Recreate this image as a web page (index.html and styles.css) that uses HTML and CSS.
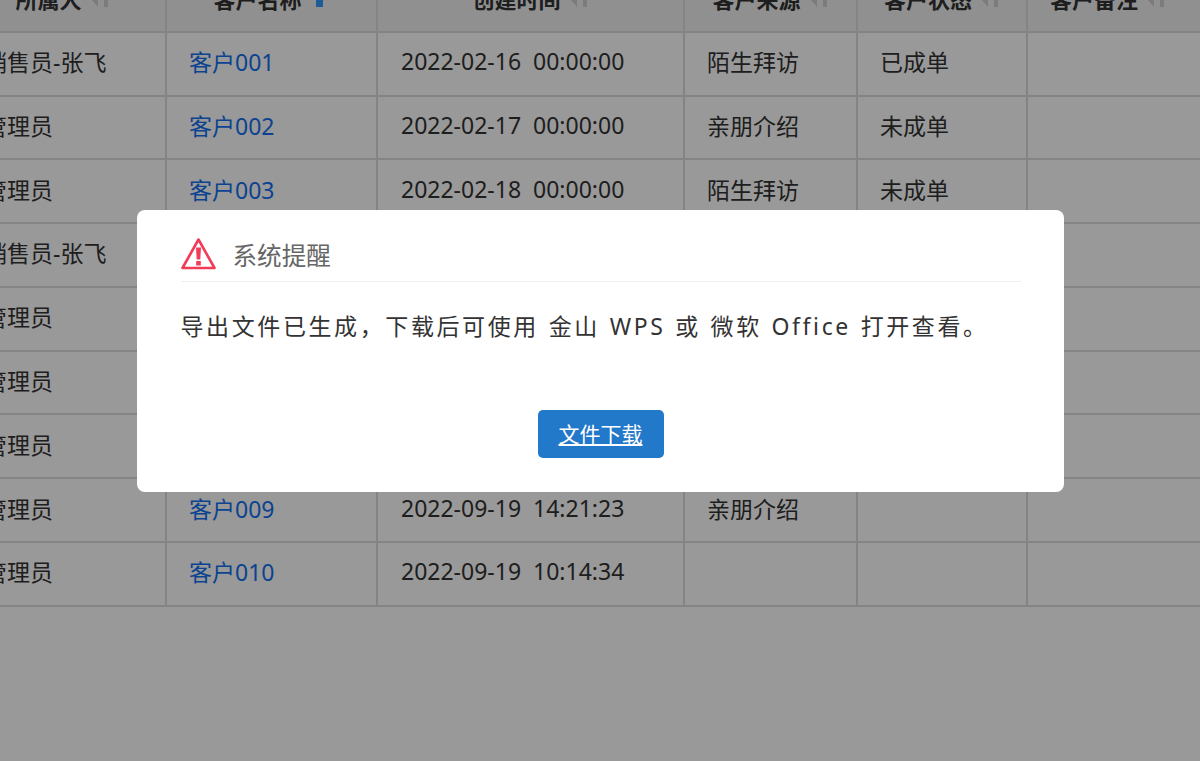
FILE: index.html
```html
<!DOCTYPE html>
<html lang="zh-CN">
<head>
<meta charset="utf-8">
<title>客户列表</title>
<link rel="stylesheet" href="styles.css">
</head>
<body>
<main class="viewport">
<table class="grid">
<colgroup>
<col class="c1"><col class="c2"><col class="c3"><col class="c4"><col class="c5"><col class="c6">
</colgroup>
<thead>
<tr>
<th>所属人<svg class="sort" viewBox="0 0 20 8"><path d="M1 0H8V8Z M14 0h4v8h-4Z"/></svg></th>
<th>客户名称<svg class="sort active" viewBox="0 0 20 8"><path d="M6 0h7v8H6Z"/></svg></th>
<th>创建时间<svg class="sort" viewBox="0 0 20 8"><path d="M1 0H8V8Z M14 0h4v8h-4Z"/></svg></th>
<th>客户来源<svg class="sort" viewBox="0 0 20 8"><path d="M1 0H8V8Z M14 0h4v8h-4Z"/></svg></th>
<th>客户状态<svg class="sort" viewBox="0 0 20 8"><path d="M1 0H8V8Z M14 0h4v8h-4Z"/></svg></th>
<th class="th-left">客户备注<svg class="sort" viewBox="0 0 20 8"><path d="M1 0H8V8Z M14 0h4v8h-4Z"/></svg></th>
</tr>
</thead>
<tbody>
<tr><td>销售员-张飞</td><td><a href="#">客户001</a></td><td class="date">2022-02-16 00:00:00</td><td>陌生拜访</td><td>已成单</td><td></td></tr>
<tr><td>管理员</td><td><a href="#">客户002</a></td><td class="date">2022-02-17 00:00:00</td><td>亲朋介绍</td><td>未成单</td><td></td></tr>
<tr><td>管理员</td><td><a href="#">客户003</a></td><td class="date">2022-02-18 00:00:00</td><td>陌生拜访</td><td>未成单</td><td></td></tr>
<tr><td>销售员-张飞</td><td><a href="#">客户004</a></td><td class="date">2022-02-19 00:00:00</td><td>亲朋介绍</td><td>未成单</td><td></td></tr>
<tr><td>管理员</td><td><a href="#">客户005</a></td><td class="date">2022-02-20 00:00:00</td><td>陌生拜访</td><td>未成单</td><td></td></tr>
<tr><td>管理员</td><td><a href="#">客户006</a></td><td class="date">2022-02-21 00:00:00</td><td>亲朋介绍</td><td>未成单</td><td></td></tr>
<tr><td>管理员</td><td><a href="#">客户007</a></td><td class="date">2022-09-19 15:02:11</td><td>陌生拜访</td><td></td><td></td></tr>
<tr><td>管理员</td><td><a href="#">客户009</a></td><td class="date">2022-09-19 14:21:23</td><td>亲朋介绍</td><td></td><td></td></tr>
<tr><td>管理员</td><td><a href="#">客户010</a></td><td class="date">2022-09-19 10:14:34</td><td></td><td></td><td></td></tr>
</tbody>
</table>
</main>
<div class="overlay">
<section class="dialog">
<header class="dialog-head">
<svg class="warn" viewBox="0 0 36 33"><path d="M17.500 2.500 1.500 31h32Z" fill="none" stroke="#f23b57" stroke-width="2.600" stroke-linejoin="round"/><path d="M15 10.500h5l-.7 12h-3.600Z M15.200 24h4.600v4.500h-4.600Z" fill="#f23b57"/></svg>
<h2 class="dialog-title">系统提醒</h2>
</header>
<p class="dialog-text">导出文件已生成，下载后可使用 金山 WPS 或 微软 Office 打开查看。</p>
<div class="dialog-foot"><a class="btn" href="#">文件下载</a></div>
</section>
</div>
</body>
</html>
```
FILE: styles.css
```css
html, body {
  margin: 0;
  height: 100%;
  overflow: hidden;
  background: #fff;
}
body {
  font-family: "Noto Sans", "Noto Sans CJK SC", sans-serif;
  color: #333;
}
.viewport {
  height: 761px;
  overflow: hidden;
}
.grid {
  table-layout: fixed;
  width: 1340px;
  margin: -33px 0 0 -42px;
  border-collapse: collapse;
  font-size: 23px;
}
.c1 { width: 207px; }
.c2 { width: 211px; }
.c3 { width: 307px; }
.c4 { width: 173px; }
.c5 { width: 170px; }
.c6 { width: 272px; }
.grid th, .grid td {
  border: 2px solid #dcdcdc;
  height: 63.78px;
  padding: 0 22px 5px;
  box-sizing: border-box;
  white-space: nowrap;
}
.grid th {
  background: #f0f0f0;
  text-align: center;
  font-weight: 700;
  font-size: 22px;
  color: #333;
  padding-bottom: 3px;
}
.grid th.th-left {
  text-align: left;
}
.grid td {
  text-align: left;
  font-weight: 400;
}
.grid td:first-child {
  padding-left: 24px;
}
.grid .date {
  padding-left: 23px;
  word-spacing: 6px;
}
.grid a {
  color: #1470f0;
  text-decoration: none;
}
.sort {
  width: 20px;
  height: 8px;
  margin-left: 8px;
  fill: #cfcfcf;
  vertical-align: 1px;
}
.sort.active {
  fill: #2f9bff;
}
.overlay {
  position: fixed;
  inset: 0;
  display: flex;
  justify-content: center;
  align-items: flex-start;
  padding-top: 210px;
  box-sizing: border-box;
  background: rgba(0, 0, 0, 0.4);
}
.dialog {
  width: 927px;
  height: 282px;
  padding: 0 43px 0 44px;
  box-sizing: border-box;
  background: #fff;
  border-radius: 8px;
}
.dialog-head {
  display: flex;
  align-items: center;
  gap: 16px;
  height: 72px;
  box-sizing: border-box;
  border-bottom: 1px solid #eee;
}
.warn {
  width: 36px;
  height: 33px;
  flex: none;
  margin-top: 16px;
}
.dialog-title {
  margin: 16px 0 0;
  font-size: 24.600px;
  font-weight: 400;
  color: #666;
}
.dialog-text {
  margin: 27px 0 0;
  font-size: 23px;
  line-height: 34px;
  letter-spacing: 2.600px;
  word-spacing: 1.200px;
  color: #333;
  white-space: nowrap;
}
.dialog-foot {
  display: flex;
  justify-content: center;
  margin-top: 67px;
}
.btn {
  display: block;
  width: 126px;
  height: 48px;
  line-height: 48px;
  text-align: center;
  font-size: 21px;
  color: #fff;
  background: #2278c9;
  border-radius: 5px;
  text-decoration: underline;
}
```
